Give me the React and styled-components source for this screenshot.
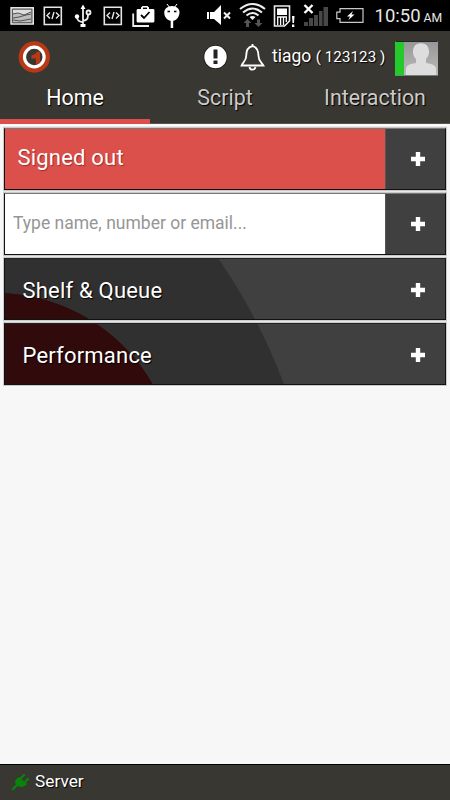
import React from "react";
import styled, { createGlobalStyle } from "styled-components";

const Global = createGlobalStyle`
  *{box-sizing:border-box}
  body{margin:0;background:#f7f7f7;font-family:Roboto,"Liberation Sans",sans-serif}
`;
const Screen = styled.div`width:450px;height:800px;display:flex;flex-direction:column;overflow:hidden;background:#f7f7f7;`;
const StatusBar = styled.div`height:31px;flex:none;background:#000;display:flex;align-items:flex-start;`;
const Glyph = styled.svg`display:block;flex:none;width:${p => p.$w}px;height:31px;margin-left:${p => p.$gap || 0}px;`;
const Clock = styled.div`margin-left:10px;color:#e6e6e6;font-size:18.5px;line-height:33px;white-space:nowrap;small{font-size:12.2px;margin-left:3px;}`;
const Header = styled.header`height:49px;flex:none;background:#393732;display:flex;align-items:flex-start;color:#fff;`;
const Picture = styled.svg`display:block;flex:none;width:${p => p.$w}px;height:${p => p.$h}px;margin:${p => p.$m};`;
const User = styled.div`width:123px;margin-left:7px;flex:none;font-size:17.5px;line-height:50px;white-space:nowrap;text-shadow:1px 1px 1px #000;span{font-size:15.1px;letter-spacing:.1px;}`;
const Tabs = styled.nav`height:44px;flex:none;background:#393732;display:grid;grid-template-columns:repeat(3,1fr);border-bottom:1px solid #5d5350;`;
const Tab = styled.div`height:44px;text-align:center;font-size:21.4px;line-height:36px;color:${p => p.$active ? "#fff" : "#cbcbc9"};text-shadow:1px 1px 1px #000;border-bottom:${p => p.$active ? "5px solid #db504a" : "0"};`;
const Main = styled.main`flex:1;padding:2px 3px 0;`;
const List = styled.div`background:#e6e8e9;padding:2px 1px 0;display:flex;flex-direction:column;gap:3px;box-shadow:0 -1px #fff;`;
const Row = styled.section`height:62px;border:1px solid #111;border-top-color:${p => p.$top || "#222"};display:flex;outline:1px solid #c8cacb;background:${p => p.$bg};`;
const Label = styled.div`flex:1;color:#fff;font-size:22px;letter-spacing:.2px;line-height:${p => p.$line || 64}px;padding-left:${p => p.$left || 17.5}px;text-shadow:1px 1px 1px ${p => p.$shadow || "#000"};`;
const Search = styled.input`flex:1;min-width:0;border:0;outline:0;border-radius:0;padding:0 8px 3px;background:#fff;font:17.5px Roboto,sans-serif;&::placeholder{color:#969696;opacity:1}`;
const Toggle = styled.button`width:60px;height:60px;flex:none;padding:${p => p.$clear ? "1px" : "0"} 0 0 5px;display:flex;align-items:center;justify-content:center;background:${p => p.$clear ? "transparent" : "#404040"};border:0;border-left:1px solid ${p => p.$edge || "transparent"};`;
const Footer = styled.footer`height:36px;flex:none;border-top:1px solid #000;background:#393732;display:flex;color:#fff;font-size:17.3px;line-height:33px;text-shadow:1px 1px 1px #000;`;

const arcs = y => `radial-gradient(circle at -10px ${474.7 - y}px,#310a0c 181.5px,transparent 182.3px),radial-gradient(circle at -253px ${582 - y}px,#303030 567px,#404040 568px)`;

function Plus() {
  return <svg width="16" height="16" viewBox="0 0 16 16"><path d="M5.8 1h4.4v4.8H15v4.400h-4.800V15H5.800v-4.800H1V5.800h4.800z" fill="#fff" /></svg>;
}
function CodeIcon({ gap }) {
  return <Glyph $w={20} $gap={gap} viewBox="0 0 20 31" fill="none" stroke="#e6e6e6"><path strokeWidth="1.6" d="M1.300 7.200h17v17.300h-17z" /><path strokeWidth="1.400" d="m7 12.500-3 3 3 3m6-6 3 3-3 3m-2-6.500-2 7" /></Glyph>;
}

export default function App() {
  return <><Global /><Screen>
    <StatusBar>
      <Glyph $w={24} $gap={10} viewBox="0 0 24 31"><path fill="#bdbdbd" stroke="#e5e5e5" strokeWidth="1.4" d="M1 7.700h22.300v16.400H1z" /><path fill="#ddd" d="M3 10h18v4l-8 1-10-2z" /><path fill="none" stroke="#505050" d="M2.400 9.100h19.500v13.600H2.400zM3 14l5-1 6 2 7-3M3 18l6-1 7-2 5-1M3 20l7 1 11-2" /></Glyph>
      <CodeIcon gap={9} />
      <Glyph $w={18} $gap={11} viewBox="0 0 18 31"><g fill="none" stroke="#eee" strokeWidth="1.800"><path d="M9 6v19M9 22.500c-4-1-6-2-6-6M9 21c4-1 5-2 5-6" /><circle cx="14.500" cy="12.500" r="2" /></g><path fill="#fff" d="M9 4.500 6.500 9h5zM6.500 24h5v3h-5z" /><circle cx="3" cy="16.500" r="2.200" fill="#fff" /></Glyph>
      <CodeIcon gap={11} />
      <Glyph $w={24} $gap={8} viewBox="0 0 24 31"><path d="M2.200 13.500V26H18" fill="none" stroke="#eee" strokeWidth="1.800" /><path fill="#fff" d="M7 9h3V7.500L11.500 6h5L18 7.500V9h4q1.400 0 1.400 1.400v10.800q0 1.400-1.400 1.400H7q-1.400 0-1.400-1.400V10.400Q5.600 9 7 9z" /><path fill="#000" d="M12 7.600h4V9h-4z" /><path d="m10 15 3 3 5.500-6" fill="none" stroke="#000" strokeWidth="1.800" /></Glyph>
      <Glyph $w={18} $gap={8} viewBox="0 0 18 31"><path d="m4 4 3 4m7-4-3 4" stroke="#fff" /><path fill="#fff" d="M1.300 13C1 9 4.500 6 9 6s8 3 7.500 7-3 7.800-7.500 7.800S1.300 17 1.300 13zM7.700 20.500h2.500V28H7.700z" /><path d="M4.500 11.500H7m4 0h2.500" stroke="#000" strokeWidth="1.300" /></Glyph>
      <Glyph $w={26} $gap={26} viewBox="0 0 26 31"><path fill="#fff" d="M0 12h2v7H0zM3 12h4l7-7v20l-7-6H3z" /><path d="m17 12.500 6 6m0-6-6 6" stroke="#eee" strokeWidth="2" /></Glyph>
      <Glyph $w={27} $gap={6} viewBox="0 0 27 31"><g fill="none" stroke="#eee" strokeWidth="2"><path d="M1 9q12.500-10 25 0M4 12.500q9.500-8 19 0M7.500 15.500q6-5 12 0" /></g><path fill="#eee" d="M10.500 17q3-2 6 0l-3 3z" /><path fill="#555" d="m8.500 19 4 4H10v4H7v-4H4.500zM19.500 27l-4-4H18v-3.500h3V23h2.500z" /></Glyph>
      <Glyph $w={25} $gap={7} viewBox="0 0 25 31"><path d="M1.500 6h15v15l-5 5h-10z" fill="none" stroke="#eee" strokeWidth="1.600" /><path fill="#fff" d="M4 8.500h10V15H4zM19 16h2.500l-.5 7h-1.500zM19 24.500h2.300V27H19z" /><path fill="none" stroke="#fff" strokeWidth="1.300" d="M4.700 25v-8h8.600v5M7.600 17v8M10.500 17v8" /></Glyph>
      <Glyph $w={25} $gap={4.5} viewBox="0 0 25 31"><path fill="#484848" d="M1 22h4v4H1zM6 18h4v8H6zM11 15h4v11h-4zM16 11h3.500v15H16zM20.500 7H25v19h-4.500z" /><path d="m1.500 5 8 8m0-8-8 8" stroke="#fff" strokeWidth="2.400" /></Glyph>
      <Glyph $w={29} $gap={8} viewBox="0 0 29 31"><path fill="none" stroke="#c9c9c9" strokeWidth="1.200" d="M4 8.600h23v13.700H4v-3.600H.8v-6.500H4z" /><path fill="#fff" d="m17 11-6 5.500h3L12.500 20l6-5.500h-3z" /></Glyph>
      <Clock>10:50<small>AM</small></Clock>
    </StatusBar>
    <Header>
      <Picture $w={34} $h={34} $m="9px 0 0 17px" viewBox="0 0 34 34"><circle cx="17.300" cy="17" r="15.700" fill="#b93816" /><circle cx="17.300" cy="17" r="9.800" fill="#393732" stroke="#fff" strokeWidth="3.200" /><path fill="#b93816" d="M20.500 11.500h2.500v11.500l-4 1.500v-6h-4.500v-3q3.500-.5 6-4z" /></Picture>
      <Picture $w={26} $h={26} $m="13px 0 0 152px" viewBox="0 0 26 26"><circle cx="12.500" cy="13" r="12" fill="#171611" /><circle cx="12.500" cy="13" r="11.200" fill="#fff" /><path fill="#222" d="M10.500 5.500h4v9h-4zM10.500 16.500h4v3.500h-4z" /></Picture>
      <Picture $w={25} $h={29} $m="12px 0 0 11px" viewBox="0 0 25 29"><path d="M12.500 3.200c-6 1-6.300 6-6.300 9.800C6.200 18 3 19 1.600 22.500h21.800C21.500 19 18.500 18 18.500 13c0-4-.5-8.800-6-9.800zM12.500 1v2M9.500 24c.5 3.500 5.300 3.500 6 0" fill="none" stroke="#fff" strokeWidth="1.800" /></Picture>
      <User>tiago <span>( 123123 )</span></User>
      <Picture $w={43} $h={35} $m="10px 0 0 0" viewBox="0 0 43 35"><defs><linearGradient id="portrait" x2="0" y2="1"><stop stopColor="#969696" /><stop offset="1" stopColor="#bbb" /></linearGradient></defs><path fill="url(#portrait)" d="M0 0h43v34.500H0z" /><path fill="#24c92b" d="M0 0h9v34.500H0z" /><path fill="#ddd" d="M11 34v-7q1-4 10-5v-4c-3-3-4-8-2-12 2-5 12-5 14 0s1 9-2 12v4q9 1 10 5v7z" /><path fill="none" stroke="#252525" d="M.5.500h42" /></Picture>
    </Header>
    <Tabs><Tab $active>Home</Tab><Tab>Script</Tab><Tab>Interaction</Tab></Tabs>
    <Main><List>
      <Row $bg="#db504a" $top="#7a7777"><Label $left={12.5} $line={58} $shadow="#9b302d">Signed out</Label><Toggle $edge="#555"><Plus /></Toggle></Row>
      <Row $bg="#fff" $top="#777"><Search placeholder="Type name, number or email..." /><Toggle $edge="#555"><Plus /></Toggle></Row>
      <Row $bg={arcs(259)}><Label>Shelf &amp; Queue</Label><Toggle $clear><Plus /></Toggle></Row>
      <Row $bg={arcs(324)}><Label>Performance</Label><Toggle $clear><Plus /></Toggle></Row>
    </List></Main>
    <Footer>
      <Picture $w={18} $h={18} $m="8px 5px 0 12px" viewBox="0 0 18 18"><path d="m1 16 5-5M9 5l3-3M13 9l3-3" stroke="#078409" strokeWidth="2.400" strokeLinecap="round" /><path fill="#078409" d="m7 4 8 7c-3 3-6 4-9 2l-3-3c0-2 1-4 4-6z" /></Picture>
      Server
    </Footer>
  </Screen></>;
}
